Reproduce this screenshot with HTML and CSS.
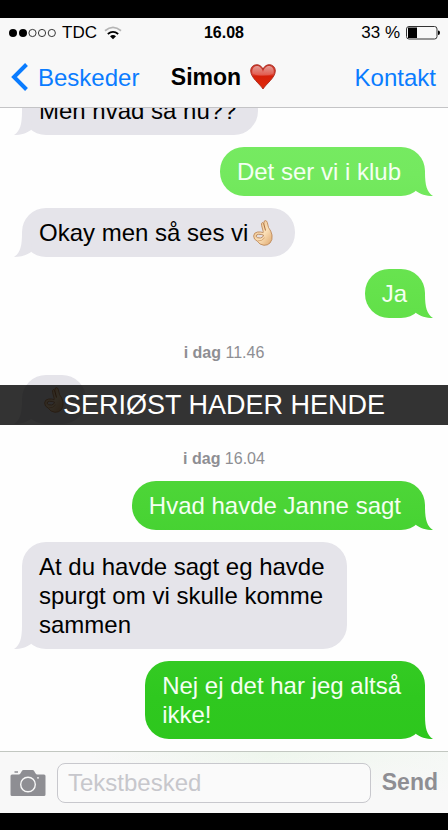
FILE: index.html
```html
<!DOCTYPE html>
<html lang="da">
<head>
<meta charset="utf-8">
<meta name="viewport" content="width=device-width, initial-scale=1">
<title>Simon</title>
<link rel="stylesheet" href="styles.css">
</head>
<body>
<svg width="0" height="0" class="defs" aria-hidden="true">
  <defs>
    <linearGradient id="skin" x1="0" y1="0" x2="1" y2="1">
      <stop offset="0" stop-color="#e9b983"/>
      <stop offset=".55" stop-color="#fbe0b8"/>
      <stop offset="1" stop-color="#dda56a"/>
    </linearGradient>
    <linearGradient id="red" x1="0" y1="0" x2="0" y2="1">
      <stop offset="0" stop-color="#c8372b"/>
      <stop offset=".4" stop-color="#de4233"/>
      <stop offset=".48" stop-color="#d62009"/>
      <stop offset="1" stop-color="#e02a0b"/>
    </linearGradient>
    <linearGradient id="shine" x1="0" y1="0" x2="0" y2="1">
      <stop offset="0" stop-color="#fff" stop-opacity=".5"/>
      <stop offset="1" stop-color="#fff" stop-opacity=".1"/>
    </linearGradient>
    <symbol id="ok-hand" viewBox="0 0 20 26">
      <path d="M10.200 11.500 8.600 5.500Q8 3 9.300 2.600 10.200 2.400 10.800 4L11 2Q11.200.5 12.500.6 13.800.7 14.300 2.500L15.500 7.500Q18.300 11 19 15 19.800 20 17 23 14.500 25.500 11 25.300 6.500 24.800 4.300 21.200.6 19.500.6 16 .8 12.500 4.500 12 7.500 11.700 10.200 12.500Z" fill="url(#skin)" stroke="#b9804e" stroke-width=".8" stroke-linejoin="round"/>
      <path d="M3 16.300Q3.200 14.500 5.500 14.300 8.500 14.200 10.600 15.200 10 17.600 7.500 18 4 18.300 3 16.300Z" fill="#e5e0e3" stroke="#b07a4b" stroke-width=".8"/>
      <path d="M10.800 4 12.500 10.500" fill="none" stroke="#a96d3e" stroke-width="1"/>
      <path d="M4.800 21Q9 21.500 11.500 18" fill="none" stroke="#d19c66" stroke-width=".8" stroke-linecap="round"/>
    </symbol>
  </defs>
</svg>

<header class="top">
  <div class="status">
    <div class="carrier">
      <svg width="48" height="10" viewBox="0 0 48 10" aria-hidden="true">
        <circle cx="5" cy="5" r="4"/><circle cx="15" cy="5" r="4"/>
        <g fill="none" stroke="#222" stroke-width=".9"><circle cx="24.500" cy="5" r="3.600"/><circle cx="34" cy="5" r="3.600"/><circle cx="43.800" cy="5" r="3.600"/></g>
      </svg>
      <span>TDC</span>
      <svg class="wifi" width="18" height="14" viewBox="0 0 18 14" fill="none" stroke-width="1.800" aria-hidden="true">
        <path d="M1 4.800Q9-2 17 4.800" stroke="#b5b5b5"/>
        <path d="M3.800 8Q9 3.800 14.200 8" stroke="#000"/>
        <path d="M6 10.200Q9 7.800 12 10.200L9 13.200Z" fill="#000"/>
      </svg>
    </div>
    <time class="clock">16.08</time>
    <div class="power">
      <span>33 %</span>
      <svg width="34" height="14" viewBox="0 0 34 14" aria-hidden="true">
        <rect x=".5" y=".5" width="30.500" height="12.500" rx="2.500" fill="none" stroke="#333"/>
        <rect x="2" y="1.500" width="9" height="10.500"/>
        <path d="M32 4.500Q34 4.500 34 6.800 34 9 32 9Z"/>
      </svg>
    </div>
  </div>
  <nav class="nav">
    <a class="back" href="#beskeder">
      <svg width="17" height="28" viewBox="0 0 17 28" aria-hidden="true"><path d="M15.500 1.500 3 14 15.500 26.500" fill="none" stroke="#0a7cff" stroke-width="4"/></svg>
      Beskeder
    </a>
    <h1 class="name">Simon
      <svg width="26" height="26" viewBox="0 0 26 26" role="img" aria-label="hjerte">
        <path d="M13 25C10 20 1 14 .7 7.200.6 3 3.500.7 6.800.7 10 .7 12.300 3 13 5.500 13.700 3 16 .7 19.200.7 22.500.7 25.400 3 25.300 7.200 25 14 16 20 13 25Z" fill="url(#red)" stroke="#a8281c" stroke-width=".9"/>
        <path d="M2.500 9.500C1.500 5 4 2 7 2 10 2 11.800 4.500 13 8 14.200 4.500 16 2 19 2 22 2 24.500 5 23.500 9.500 17 12.500 9 12.500 2.500 9.500Z" fill="url(#shine)"/>
      </svg>
    </h1>
    <a class="contact" href="#kontakt">Kontakt</a>
  </nav>
</header>

<main class="thread">
  <div class="row"><p class="bubble in">Men hvad så nu??</p></div>
  <div class="row sent"><p class="bubble out">Det ser vi i klub</p></div>
  <div class="row"><p class="bubble in">Okay men så ses vi<svg class="emoji trailing" role="img" aria-label="ok"><use href="#ok-hand"/></svg></p></div>
  <div class="row sent"><p class="bubble out short">Ja</p></div>
  <p class="stamp"><b>i dag</b>&nbsp;11.46</p>
  <div class="row captioned">
    <p class="bubble in single"><svg class="emoji" role="img" aria-label="ok"><use href="#ok-hand"/></svg></p>
    <p class="caption">SERIØST HADER HENDE</p>
  </div>
  <p class="stamp"><b>i dag</b>&nbsp;16.04</p>
  <div class="row sent"><p class="bubble out">Hvad havde Janne sagt</p></div>
  <div class="row"><p class="bubble in">At du havde sagt eg havde<br>spurgt om vi skulle komme<br>sammen</p></div>
  <div class="row sent"><p class="bubble out">Nej ej det har jeg altså<br>ikke!</p></div>
</main>

<form class="composer">
  <button class="camera" type="button" aria-label="Kamera">
    <svg width="36" height="28" viewBox="0 0 36 28" aria-hidden="true">
      <path d="M2 5.500H9Q10 5.500 11 3.500L12 1.800Q12.500 1 13.500 1H22.500Q23.500 1 24 1.800L25 3.500Q26 5.500 27 5.500H34Q35.500 5.500 35.500 7V25.500Q35.500 27 34 27H2Q.5 27 .5 25.500V7Q.5 5.500 2 5.500Z" fill="#8e8e93"/>
      <path d="M4.500 3H8" stroke="#8e8e93" stroke-width="1.500"/>
      <circle cx="18" cy="15.500" r="7.300" fill="none" stroke="#f8f8f8" stroke-width="1.400"/>
      <circle cx="28" cy="8.800" r=".9" fill="#f8f8f8"/>
    </svg>
  </button>
  <input class="field" type="text" placeholder="Tekstbesked" aria-label="Tekstbesked">
  <button class="send" type="submit">Send</button>
</form>
</body>
</html>
```
FILE: styles.css
```css
* {
  box-sizing: border-box;
}

body {
  display: flex;
  flex-direction: column;
  height: 100vh;
  margin: 0;
  padding: 18px 0 17px;
  background: #000;
  color: #000;
  font: 24px/29px "Liberation Sans", Arial, sans-serif;
}

p,
h1 {
  margin: 0;
}

svg {
  display: block;
  flex: none;
}

.defs {
  position: absolute;
}

/* Status bar and navigation */
.top {
  flex: none;
  background: #f8f8f8;
  border-bottom: 1px solid #c4c4c6;
}

.status,
.nav {
  display: grid;
  grid-template-columns: 1fr auto 1fr;
  align-items: center;
}

.status {
  height: 29px;
  padding: 0 8px;
  font-size: 17px;
}

.carrier,
.power {
  display: flex;
  align-items: center;
  gap: 6px;
}

.wifi {
  margin-left: 1px;
}

.power {
  justify-content: flex-end;
}

.clock {
  font-size: 16px;
  font-weight: bold;
}

.nav {
  height: 60px;
  padding: 0 12px 0 11px;
}

.back,
.contact {
  color: #0a7cff;
  text-decoration: none;
}

.back {
  display: flex;
  align-items: center;
  gap: 10px;
}

.contact {
  justify-self: end;
}

.name {
  display: flex;
  align-items: center;
  gap: 9px;
  font-size: 23px;
  line-height: 29px;
}

/* Conversation */
.thread {
  display: flex;
  flex: 1;
  flex-direction: column;
  justify-content: flex-end;
  gap: 12px;
  min-height: 0;
  padding-bottom: 12px;
  overflow: hidden;
  background: #fefefe;
}

.row {
  display: flex;
  flex: none;
  padding: 0 23px 0 22px;
}

.sent {
  justify-content: flex-end;
}

.bubble {
  position: relative;
  max-width: 85%;
  padding: 10px 24px 10px 17px;
  border-radius: 24px;
}

.bubble::after {
  content: "";
  position: absolute;
  bottom: 0;
  width: 18px;
  height: 24px;
  background: inherit;
}

.in {
  padding-right: 22px;
  background: #e5e4ea;
}

.in::after {
  left: -8px;
  clip-path: path("M8 0C8 14 6 20 0 24C7 24 13 22 17 19L18 0Z");
}

.out {
  background: linear-gradient(#7eee6a 0%, #74e95f 21%, #65e24c 35%, #4ad435 61%, #2fc81f 84%, #2ac519 100%) fixed;
  color: #f4fff2;
}

.out::after {
  right: -8px;
  clip-path: path("M10 0C10 14 12 20 18 24C11 24 5 22 1 19L0 0Z");
}

.short {
  padding-right: 18px;
}

.single {
  padding: 10px 22px;
}

.emoji {
  display: inline-block;
  width: 20px;
  height: 26px;
  vertical-align: -5px;
}

.trailing {
  margin-left: 5px;
}

.stamp {
  display: flex;
  flex: none;
  align-items: flex-end;
  justify-content: center;
  height: 33px;
  color: #8e8e93;
  font-size: 16px;
  line-height: 20px;
}

/* Text band laid over a message */
.captioned {
  position: relative;
}

.caption {
  position: absolute;
  top: 10px;
  right: 0;
  left: 0;
  background: rgba(0, 0, 0, 0.8);
  color: #fff;
  font-size: 27px;
  line-height: 40px;
  text-align: center;
}

/* Message entry */
.composer {
  display: flex;
  flex: none;
  align-items: center;
  gap: 11px;
  height: 62px;
  padding: 0 10px;
  border-top: 1px solid #c2c7c1;
  background: linear-gradient(#f8f8f800, #f8f8f8 70%), linear-gradient(90deg, #f8f8f8 20%, #eef6ed 60%, #f5f8f5);
}

.camera,
.send {
  flex: none;
  padding: 0;
  border: 0;
  background: none;
}

.send {
  color: #8e8e93;
  font: bold 23px/29px "Liberation Sans", Arial, sans-serif;
}

.field {
  flex: 1;
  min-width: 0;
  height: 40px;
  padding: 0 10px;
  border: 1px solid #c8c8cd;
  border-radius: 8px;
  background: #fafafa;
  font: inherit;
}

.field::placeholder {
  color: #c7c7cc;
  opacity: 1;
}
```
